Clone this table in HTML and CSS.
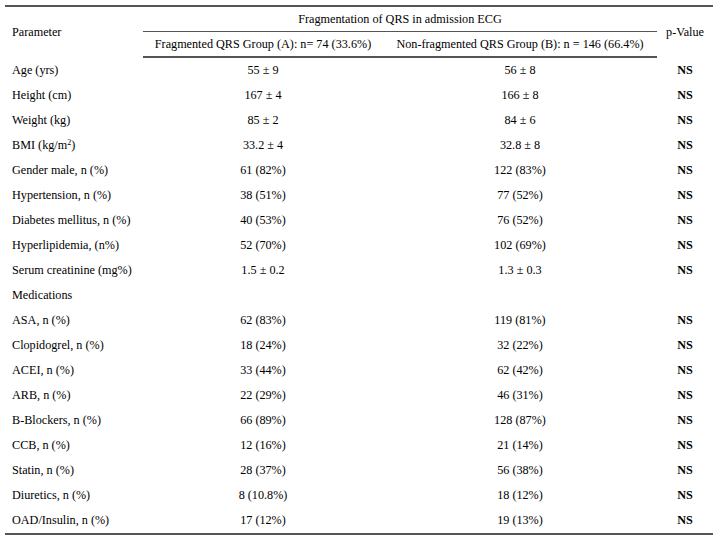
FILE: index.html
```html
<!DOCTYPE html>
<html>
<head>
<meta charset="utf-8">
<link rel="stylesheet" href="styles.css">
</head>
<body>
<table class="tbl">
  <colgroup>
    <col class="c-param">
    <col class="c-a">
    <col class="c-b">
    <col class="c-p">
  </colgroup>
  <thead>
    <tr class="h1">
      <th rowspan="2" class="left">Parameter</th>
      <th colspan="2" class="group"><span>Fragmentation of QRS in admission ECG</span></th>
      <th rowspan="2" class="pv">p-Value</th>
    </tr>
    <tr class="h2">
      <th>Fragmented QRS Group (A): n= 74 (33.6%)</th>
      <th>Non-fragmented QRS Group (B): n = 146 (66.4%)</th>
    </tr>
  </thead>
  <tbody>
    <tr><td class="left">Age (yrs)</td><td>55 ± 9</td><td>56 ± 8</td><td class="ns">NS</td></tr>
    <tr><td class="left">Height (cm)</td><td>167 ± 4</td><td>166 ± 8</td><td class="ns">NS</td></tr>
    <tr><td class="left">Weight (kg)</td><td>85 ± 2</td><td>84 ± 6</td><td class="ns">NS</td></tr>
    <tr><td class="left">BMI (kg/m<sup>2</sup>)</td><td>33.2 ± 4</td><td>32.8 ± 8</td><td class="ns">NS</td></tr>
    <tr><td class="left">Gender male, n (%)</td><td>61 (82%)</td><td>122 (83%)</td><td class="ns">NS</td></tr>
    <tr><td class="left">Hypertension, n (%)</td><td>38 (51%)</td><td>77 (52%)</td><td class="ns">NS</td></tr>
    <tr><td class="left">Diabetes mellitus, n (%)</td><td>40 (53%)</td><td>76 (52%)</td><td class="ns">NS</td></tr>
    <tr><td class="left">Hyperlipidemia, (n%)</td><td>52 (70%)</td><td>102 (69%)</td><td class="ns">NS</td></tr>
    <tr><td class="left">Serum creatinine (mg%)</td><td>1.5 ± 0.2</td><td>1.3 ± 0.3</td><td class="ns">NS</td></tr>
    <tr><td class="left">Medications</td><td></td><td></td><td></td></tr>
    <tr><td class="left">ASA, n (%)</td><td>62 (83%)</td><td>119 (81%)</td><td class="ns">NS</td></tr>
    <tr><td class="left">Clopidogrel, n (%)</td><td>18 (24%)</td><td>32 (22%)</td><td class="ns">NS</td></tr>
    <tr><td class="left">ACEI, n (%)</td><td>33 (44%)</td><td>62 (42%)</td><td class="ns">NS</td></tr>
    <tr><td class="left">ARB, n (%)</td><td>22 (29%)</td><td>46 (31%)</td><td class="ns">NS</td></tr>
    <tr><td class="left">B-Blockers, n (%)</td><td>66 (89%)</td><td>128 (87%)</td><td class="ns">NS</td></tr>
    <tr><td class="left">CCB, n (%)</td><td>12 (16%)</td><td>21 (14%)</td><td class="ns">NS</td></tr>
    <tr><td class="left">Statin, n (%)</td><td>28 (37%)</td><td>56 (38%)</td><td class="ns">NS</td></tr>
    <tr><td class="left">Diuretics, n (%)</td><td>8 (10.8%)</td><td>18 (12%)</td><td class="ns">NS</td></tr>
    <tr><td class="left">OAD/Insulin, n (%)</td><td>17 (12%)</td><td>19 (13%)</td><td class="ns">NS</td></tr>
  </tbody>
</table>
</body>
</html>
```
FILE: styles.css
```css
html, body {
  margin: 0;
  padding: 0;
  background: #ffffff;
}
body {
  font-family: "Liberation Serif", "Times New Roman", serif;
  font-size: 12.2px;
  color: #000;
}
.tbl {
  margin: 5px 0 0 5px;
  width: 708px;
  table-layout: fixed;
  border-collapse: collapse;
  border-top: 2px solid #555;
  border-bottom: 2px solid #555;
}
.c-param { width: 138px; }
.c-a { width: 240px; }
.c-b { width: 274px; }
.c-p { width: 56px; }
th, td {
  padding: 0;
  height: 25px;
  text-align: center;
  vertical-align: middle;
  font-weight: normal;
  white-space: nowrap;
}
thead tr.h1 th { height: 24px; }
thead tr.h2 th {
  height: 24px;
  border-bottom: 2px solid #555;
}
thead .group span {
  display: block;
  line-height: 24px;
}
thead tr.h1 th.group {
  border-bottom: 1.5px solid #555;
}
.left {
  text-align: left;
  padding-left: 7px;
}
thead th.left { padding-top: 1px; }
.ns { font-weight: bold; }
sup {
  font-size: 8px;
  line-height: 0;
  vertical-align: 4px;
}
```
